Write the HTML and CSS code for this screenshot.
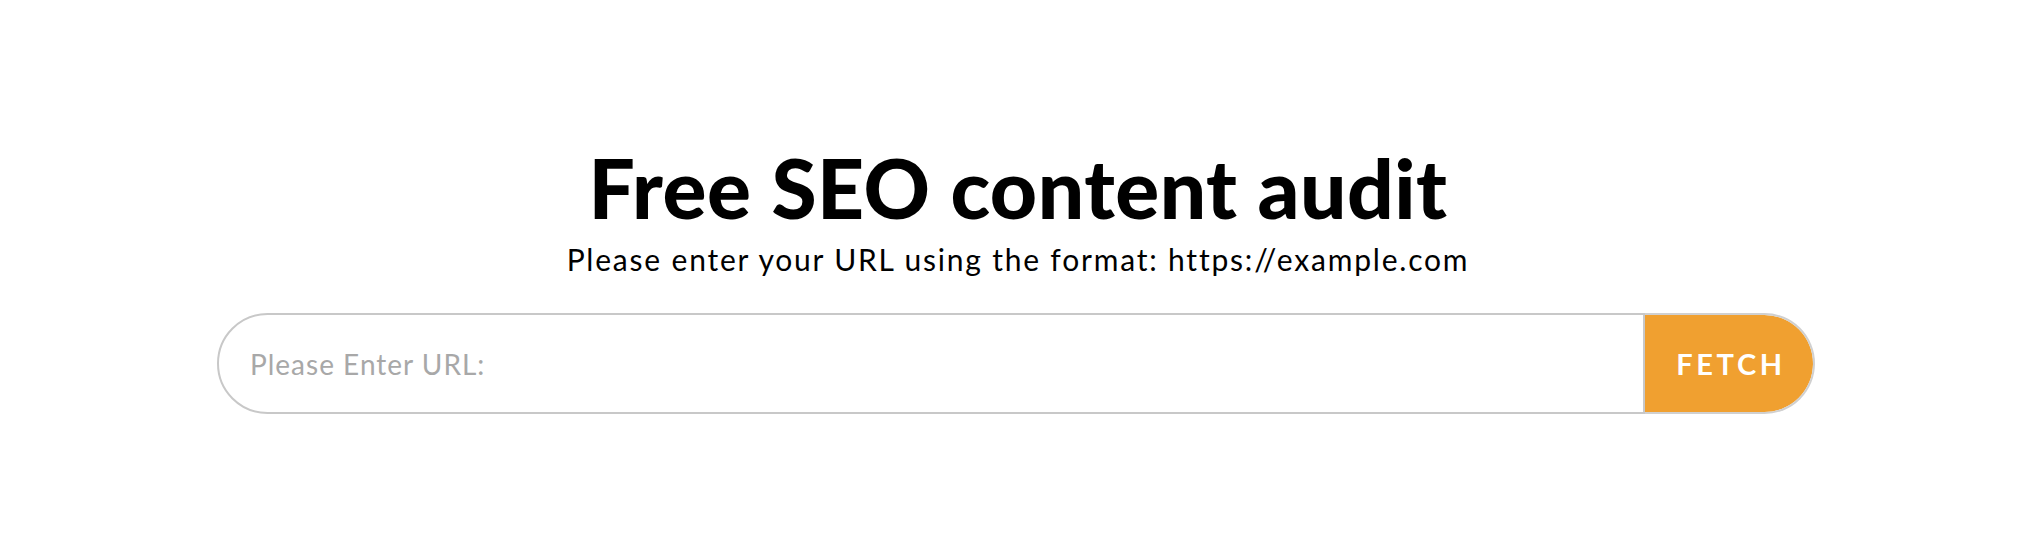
FILE: index.html
```html
<!DOCTYPE html>
<html lang="en">
<head>
<meta charset="utf-8">
<title>Free SEO content audit</title>
<link rel="stylesheet" href="styles.css">
</head>
<body>
<main class="audit">
  <h1 class="audit-title">Free SEO content audit</h1>
  <p class="audit-sub">Please enter your URL using the format: https://example.com</p>
  <form class="audit-form">
    <input class="audit-input" type="text" placeholder="Please Enter URL:">
    <button class="audit-btn" type="button">FETCH</button>
  </form>
</main>
</body>
</html>
```
FILE: styles.css
```css
html, body {
  margin: 0;
  padding: 0;
  background: #ffffff;
}
body {
  font-family: Lato, "Open Sans", sans-serif;
  color: #000;
}
.audit {
  display: flex;
  flex-direction: column;
  align-items: center;
  padding-top: 146px;
  height: 555px;
  box-sizing: border-box;
}
.audit-title {
  margin: 0;
  font-size: 82px;
  line-height: 82px;
  font-weight: 900;
  letter-spacing: 0.5px;
}
.audit-sub {
  margin: 13px 0 0;
  font-size: 30px;
  line-height: 36px;
  font-weight: 400;
  letter-spacing: 1.8px;
}
.audit-form {
  display: flex;
  margin: 36px 0 0;
  width: 1598px;
  margin-left: -4px;
}
.audit-input {
  flex: 1;
  height: 101px;
  box-sizing: border-box;
  border: 2px solid #c8c8c8;
  border-radius: 51px 0 0 51px;
  padding: 0 0 0 31px;
  font-family: Lato, sans-serif;
  font-size: 28px;
  letter-spacing: 1px;
  color: #333;
  outline: none;
  background: #fff;
}
.audit-input::placeholder {
  color: #a8a8a8;
}
.audit-btn {
  width: 170px;
  height: 101px;
  box-sizing: border-box;
  border: 2px solid #d0d0d0;
  border-left: none;
  border-radius: 0 51px 51px 0;
  background: #f0a030;
  background-clip: padding-box;
  color: #fff;
  font-family: Lato, sans-serif;
  font-weight: 700;
  font-size: 29px;
  letter-spacing: 3.6px;
  padding: 0 0 0 4px;
  cursor: pointer;
}
```
